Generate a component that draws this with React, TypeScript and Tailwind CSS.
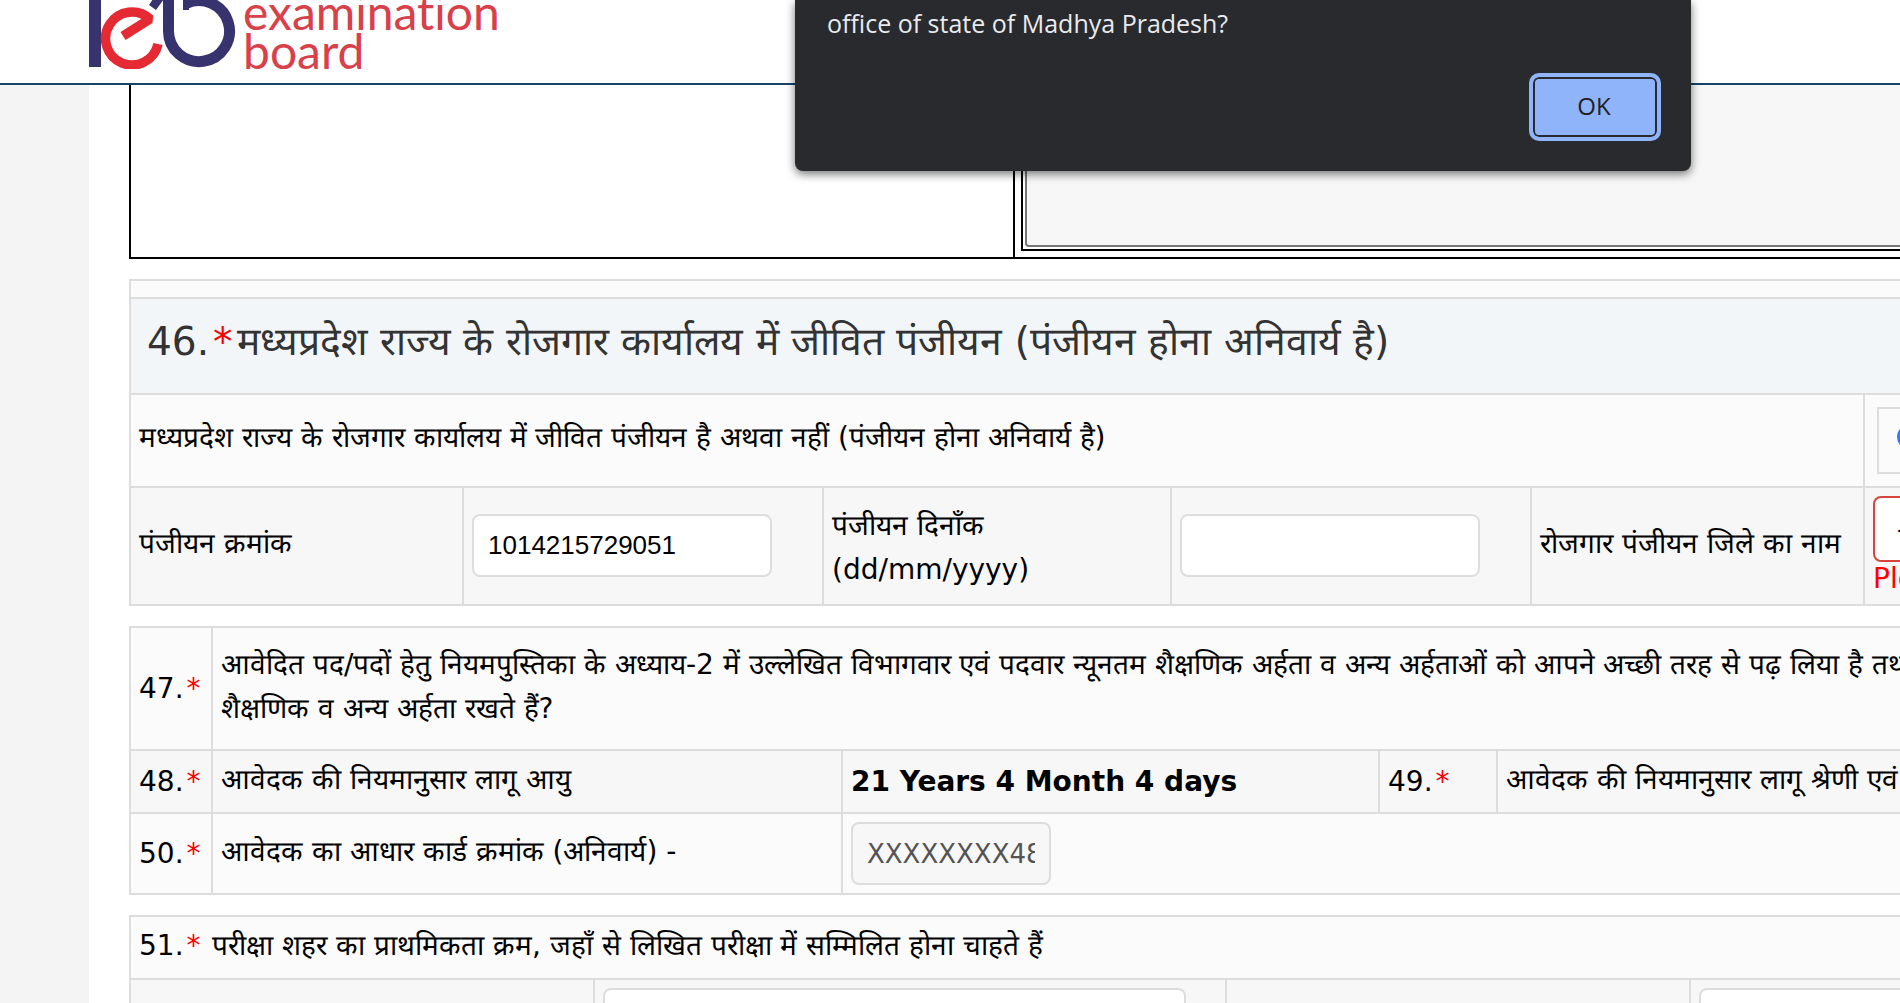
import type { ReactNode } from "react";

const cell = "border-2 border-[#dddddd] px-2 align-middle";
const even = "bg-[#f7f7f7]";
const odd = "bg-[#fbfbfb]";
const field = "rounded-lg border-2 border-[#dddddd] bg-white px-[14px]";
const tableBase = "mt-5 w-[calc(100%+480px)] table-fixed border-collapse";

function Required() {
  return <span className="mx-[3px] text-[#ff0000]">*</span>;
}

function Columns({ widths }: { widths: string[] }) {
  return (
    <colgroup>
      {widths.map((w, i) => (
        <col key={i} className={w} />
      ))}
      <col />
    </colgroup>
  );
}

function Cell({ children, className = "", span }: { children?: ReactNode; className?: string; span?: number }) {
  return (
    <td colSpan={span} className={`${cell} ${className}`}>
      {children}
    </td>
  );
}

function Logo() {
  return (
    <svg width="420" height="69" viewBox="0 0 420 69" role="img" aria-label="Examination board" className="block">
      <rect x="0" y="0" width="12" height="67" fill="#36336f" />
      <path d="M60 5 L67 10 L75 -1 L64 -1 Z" fill="#36336f" />
      <path d="M79.5 -2 V31 A30.5 30.5 0 1 0 97 3.5" fill="none" stroke="#36336f" strokeWidth="11" />
      <rect x="94" y="0" width="6" height="10" fill="#36336f" />
      <path
        d="M69 44 A26.5 26.5 0 1 1 61 19 L34 36"
        fill="none"
        stroke="#e52a33"
        strokeWidth="9.5"
        strokeLinejoin="bevel"
      />
      <g
        fill="#d8404a"
        fontFamily="Lato, sans-serif"
        fontSize="48"
        className="[font-variant-ligatures:none]"
      >
        <text x="154" y="30">examination</text>
        <text x="154" y="69">board</text>
      </g>
    </svg>
  );
}

function AlertDialog() {
  return (
    <div
      role="alertdialog"
      aria-labelledby="alert-text"
      className="absolute top-0 left-[795px] flex h-[171px] w-[896px] flex-col items-end justify-between rounded-b-lg bg-[#292a2d] pr-[30px] pb-[30px] pl-8 shadow-[0_3px_10px_rgba(0,0,0,0.55)]"
    >
      <p
        id="alert-text"
        className="w-full pt-1.5 font-['Open_Sans',sans-serif] text-[25px] leading-[34px] text-[#e8eaed]"
      >
        office of state of Madhya Pradesh?
      </p>
      <button
        type="button"
        className="h-[68px] w-[132px] rounded-[10px] border-4 border-[#8fb4fa] bg-[#8fb4fa] pr-0.5 pb-0.5 font-['Open_Sans',sans-serif] text-[24px] font-medium text-[#202124] shadow-[inset_0_0_0_2px_#292a2d]"
      >
        OK
      </button>
    </div>
  );
}

function PhotoTable() {
  return (
    <table className="w-[calc(100%+480px)] table-fixed border-collapse">
      <Columns widths={["w-[884px]"]} />
      <tbody>
        <tr>
          <td className="border-2 border-t-0 border-black" />
          <td className="border-2 border-t-0 border-black px-[6px] pb-[6px]">
            <div className="border-2 border-t-0 border-black p-[2px] pt-0">
              <textarea
                aria-label="Details"
                readOnly
                className="block h-[162px] w-full resize-none rounded-b-sm border-2 border-t-0 border-[#767676] bg-[#f7f7f7]"
              />
            </div>
          </td>
        </tr>
      </tbody>
    </table>
  );
}

function EmploymentTable() {
  return (
    <table className={tableBase}>
      <Columns widths={["w-[333px]", "w-[360px]", "w-[348px]", "w-[360px]", "w-[333px]"]} />
      <tbody>
        <tr className={`h-[18px] ${odd}`}>
          <Cell span={6} />
        </tr>
        <tr className="h-[96px] bg-[#f2f6f9]">
          <Cell span={6} className="pb-2">
            <h3 className="pl-2 text-[39px] leading-[56px] text-[#333333]">
              46.<span className="mx-1 text-[#ff0000]">*</span>मध्यप्रदेश राज्य के रोजगार कार्यालय में जीवित पंजीयन
              (पंजीयन होना अनिवार्य है)
            </h3>
          </Cell>
        </tr>
        <tr className={`h-[93px] ${odd}`}>
          <Cell span={5} className="pb-1.5">
            मध्यप्रदेश राज्य के रोजगार कार्यालय में जीवित पंजीयन है अथवा नहीं (पंजीयन होना अनिवार्य है)
          </Cell>
          <Cell>
            <div className="mx-1 flex h-[67px] items-center border-2 border-[#dddddd] pb-2 pl-[18px]">
              <label className="flex items-center gap-3">
                <input
                  type="radio"
                  name="live"
                  defaultChecked
                  className="size-[26px] appearance-none rounded-full border-[3px] border-[#2f7bf6] bg-white"
                />
                हाँ
              </label>
            </div>
          </Cell>
        </tr>
        <tr className={`h-[118px] ${even}`}>
          <Cell className="pb-1">
            <label htmlFor="reg-no">पंजीयन क्रमांक</label>
          </Cell>
          <Cell className="pb-0.5">
            <input
              id="reg-no"
              defaultValue="1014215729051"
              className={`${field} block h-[63px] w-[300px] font-['Liberation_Sans',Arial,sans-serif] text-[26px]`}
            />
          </Cell>
          <Cell className="pt-1">
            <label htmlFor="reg-date">पंजीयन दिनाँक (dd/mm/yyyy)</label>
          </Cell>
          <Cell className="pb-0.5">
            <input id="reg-date" className={`${field} block h-[63px] w-[300px] text-[26px]`} />
          </Cell>
          <Cell className="pb-1">
            <label htmlFor="district">रोजगार पंजीयन जिले का नाम</label>
          </Cell>
          <Cell>
            <select
              id="district"
              className="block h-[66px] w-[400px] appearance-none rounded-lg border-2 border-[#d9443a] bg-white px-[22px] text-[26px]"
            >
              <option>--Select--</option>
            </select>
            <p className="leading-[34px] text-[#ff0000]">Please Select</p>
          </Cell>
        </tr>
      </tbody>
    </table>
  );
}

function EligibilityTable() {
  return (
    <table className={tableBase}>
      <Columns widths={["w-[82px]", "w-[630px]", "w-[537px]", "w-[118px]"]} />
      <tbody>
        <tr className={`h-[123px] ${odd}`}>
          <Cell className="whitespace-nowrap">
            47.
            <Required />
          </Cell>
          <Cell span={4} className="pb-1 whitespace-nowrap">
            आवेदित पद/पदों हेतु नियमपुस्तिका के अध्याय-2 में उल्लेखित विभागवार एवं पदवार न्यूनतम शैक्षणिक अर्हता व अन्य
            अर्हताओं को आपने अच्छी तरह से पढ़ लिया है तथा
            <br />
            शैक्षणिक व अन्य अर्हता रखते हैं?
          </Cell>
        </tr>
        <tr className={`h-[63px] ${even}`}>
          <Cell className="whitespace-nowrap">
            48.
            <Required />
          </Cell>
          <Cell className="pb-1">आवेदक की नियमानुसार लागू आयु</Cell>
          <Cell className="font-bold">21 Years 4 Month 4 days</Cell>
          <Cell>
            49.
            <Required />
          </Cell>
          <Cell className="pb-1">आवेदक की नियमानुसार लागू श्रेणी एवं</Cell>
        </tr>
        <tr className={`h-[81px] ${odd}`}>
          <Cell className="whitespace-nowrap">
            50.
            <Required />
          </Cell>
          <Cell className="pb-1">
            <label htmlFor="aadhaar">आवेदक का आधार कार्ड क्रमांक (अनिवार्य) -</label>
          </Cell>
          <Cell span={3}>
            <input
              id="aadhaar"
              disabled
              defaultValue="XXXXXXXX4821"
              className="block h-[63px] w-[200px] rounded-lg border-2 border-[#dddddd] bg-[#f7f7f7] px-[14px] text-[26px] text-[#545454]"
            />
          </Cell>
        </tr>
      </tbody>
    </table>
  );
}

function CityTable() {
  return (
    <table className={tableBase}>
      <Columns widths={["w-[464px]", "w-[632px]", "w-[464px]"]} />
      <tbody>
        <tr className={`h-[63px] ${odd}`}>
          <Cell span={4} className="pb-1">
            51.
            <Required /> परीक्षा शहर का प्राथमिकता क्रम, जहाँ से लिखित परीक्षा में सम्मिलित होना चाहते हैं
          </Cell>
        </tr>
        <tr className={`h-[81px] ${even}`}>
          <Cell />
          <Cell>
            <select aria-label="City 1" className={`${field} block h-[63px] w-[583px] appearance-none`} />
          </Cell>
          <Cell />
          <Cell>
            <select aria-label="City 2" className={`${field} block h-[63px] w-[583px] appearance-none`} />
          </Cell>
        </tr>
      </tbody>
    </table>
  );
}

export default function App() {
  return (
    <div className="relative flex h-screen flex-col overflow-hidden bg-[#f4f4f4] font-['DejaVu_Sans',Verdana,sans-serif] text-[28px] leading-[44px] text-black">
      <header className="h-[85px] shrink-0 border-b-2 border-[#17446b] bg-white pl-[89px]">
        <Logo />
      </header>
      <main className="ml-[89px] min-h-0 flex-1 overflow-hidden bg-white pl-10">
        <PhotoTable />
        <EmploymentTable />
        <EligibilityTable />
        <CityTable />
      </main>
      <AlertDialog />
    </div>
  );
}
